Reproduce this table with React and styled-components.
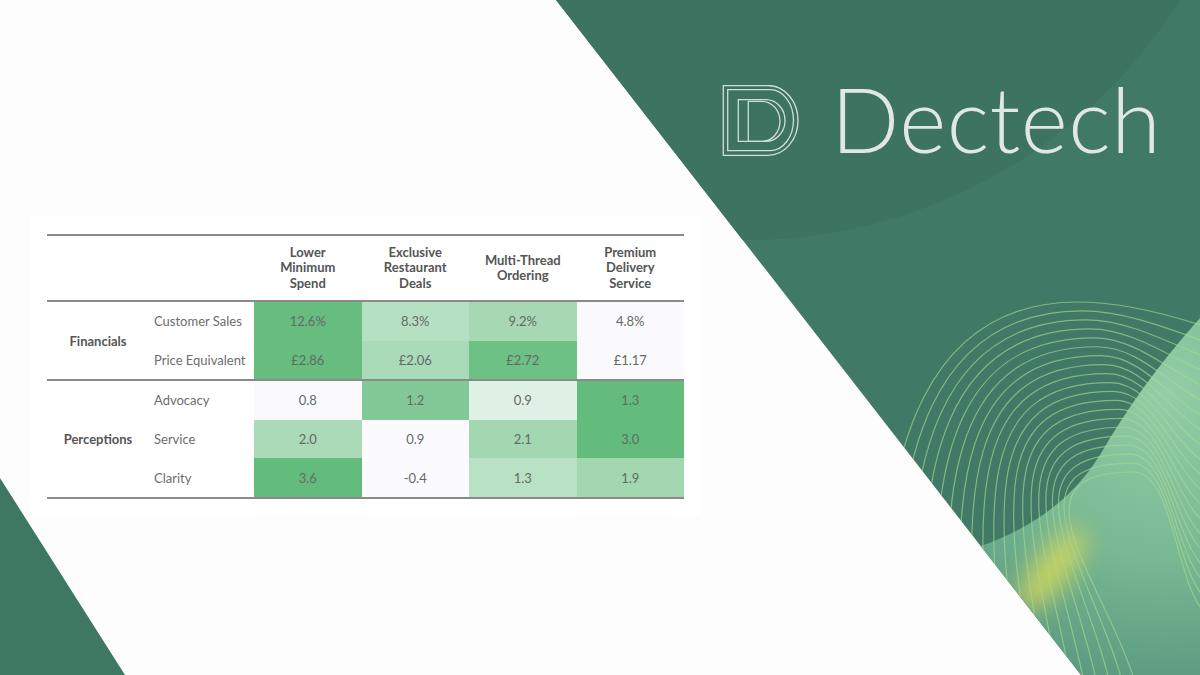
import React from "react";
import styled, { createGlobalStyle } from "styled-components";

const GlobalStyle = createGlobalStyle`
  html, body { margin: 0; padding: 0; background: #fdfdfd; }
  body { font-family: "Lato", "Liberation Sans", sans-serif; }
  * { box-sizing: border-box; }
`;

const Page = styled.div`
  position: relative;
  width: 1200px;
  height: 675px;
  overflow: hidden;
  background: #fdfdfd;
`;

const Backdrop = styled.svg`
  position: absolute;
  inset: 0;
  width: 1200px;
  height: 675px;
  z-index: 0;
`;

const Content = styled.div`
  position: relative;
  z-index: 1;
  display: grid;
  grid-template-columns: 700px 1fr;
  height: 100%;
`;

const LeftColumn = styled.div`
  padding: 215px 0 0 30px;
`;

const RightColumn = styled.div`
  padding: 73px 0 0 22px;
`;

const Card = styled.div`
  width: 670px;
  background: #ffffff;
  padding: 19px 16px 16px 17px;
`;

const Table = styled.div`
  width: 637px;
  border-top: 2px solid #8a8a8a;
  border-bottom: 2px solid #8a8a8a;
`;

const COLS = "107px 100px repeat(4, 107.5px)";

const HeaderRow = styled.div`
  display: grid;
  grid-template-columns: ${COLS};
  height: 64px;
`;

const HeaderCell = styled.div`
  display: flex;
  flex-direction: column;
  align-items: center;
  justify-content: center;
  text-align: center;
  font-weight: 700;
  font-size: 13px;
  line-height: 15.4px;
  color: #555555;
`;

const Line = styled.span`
  display: block;
  white-space: nowrap;
`;

const Section = styled.div`
  display: grid;
  grid-template-columns: ${COLS};
  grid-auto-rows: ${(p) => p.$rowH}px;
  border-top: 2px solid #8a8a8a;
`;

const GroupLabel = styled.div`
  grid-row: span ${(p) => p.$rows};
  display: flex;
  align-items: center;
  justify-content: center;
  padding-right: 5px;
  font-weight: 700;
  font-size: 13px;
  color: #555555;
  background: #ffffff;
`;

const SubLabel = styled.div`
  display: flex;
  align-items: center;
  font-size: 13px;
  color: #6d6d6d;
  background: #ffffff;
  white-space: nowrap;
`;

const ValueCell = styled.div`
  display: flex;
  align-items: center;
  justify-content: center;
  font-size: 13px;
  color: #636a66;
  background: ${(p) => p.$bg};
`;

const Logo = styled.div`
  display: flex;
  align-items: flex-start;
  gap: 31px;
`;

const LogoMark = styled.svg`
  width: 78px;
  height: 72px;
  margin-top: 12px;
  flex: none;
`;

const Wordmark = styled.div`
  font-family: "Lato", "Liberation Sans", sans-serif;
  font-weight: 300;
  font-size: 90px;
  line-height: 90px;
  color: #e1e7e3;
  letter-spacing: 0.5px;
`;

const headers = [
  ["Lower", "Minimum", "Spend"],
  ["Exclusive", "Restaurant", "Deals"],
  ["Multi-Thread", "Ordering"],
  ["Premium", "Delivery", "Service"],
];

const groups = [
  {
    name: "Financials",
    rowH: 38.5,
    items: [
      {
        label: "Customer Sales",
        cells: [
          ["12.6%", "#66bd7e"],
          ["8.3%", "#b6e0c2"],
          ["9.2%", "#a5d8b3"],
          ["4.8%", "#fafafc"],
        ],
      },
      {
        label: "Price Equivalent",
        cells: [
          ["£2.86", "#66bd7e"],
          ["£2.06", "#aadbb8"],
          ["£2.72", "#6ec185"],
          ["£1.17", "#fafafc"],
        ],
      },
    ],
  },
  {
    name: "Perceptions",
    rowH: 38.7,
    items: [
      {
        label: "Advocacy",
        cells: [
          ["0.8", "#fafafc"],
          ["1.2", "#83c998"],
          ["0.9", "#dff0e4"],
          ["1.3", "#64bc7c"],
        ],
      },
      {
        label: "Service",
        cells: [
          ["2.0", "#aadab7"],
          ["0.9", "#fbfbfd"],
          ["2.1", "#a3d7b1"],
          ["3.0", "#64bc7c"],
        ],
      },
      {
        label: "Clarity",
        cells: [
          ["3.6", "#64bc7c"],
          ["-0.4", "#fbfbfd"],
          ["1.3", "#b9e1c4"],
          ["1.9", "#a2d7b0"],
        ],
      },
    ],
  },
];

function dPath(L, T, B, S, rx) {
  const ry = (B - T) / 2;
  return `M${L} ${T} H${S} A${rx} ${ry} 0 0 1 ${S} ${B} H${L} Z`;
}

function waveLines() {
  const out = [];
  const n = 20;
  for (let i = 0; i < n; i++) {
    const t = i / (n - 1);
    const x0 = 890 + t * 250;
    const xp = 1078 + t * 80 - t * t * 25;
    const yp = 302 + t * 170;
    const ye = 330 + t * 290;
    const d = `M${x0} 700 C ${x0 - 25} ${yp + 120} ${xp - 135} ${yp} ${xp} ${yp} C ${xp + 45} ${yp} 1175 ${ye - 14} 1215 ${ye}`;
    out.push(d);
  }
  return out;
}

function Background() {
  const lines = waveLines();
  return (
    <Backdrop viewBox="0 0 1200 675" aria-hidden="true">
      <defs>
        <clipPath id="greenClip">
          <path d="M556 0 L1200 0 L1200 675 L1081 675 Z" />
        </clipPath>
        <radialGradient id="lightGrad" cx="1165" cy="395" r="330" gradientUnits="userSpaceOnUse">
          <stop offset="0" stopColor="#92cea6" />
          <stop offset="0.5" stopColor="#78b893" />
          <stop offset="1" stopColor="#52917a" />
        </radialGradient>
        <filter id="glowBlur" x="-100%" y="-100%" width="300%" height="300%">
          <feGaussianBlur stdDeviation="12" />
        </filter>
      </defs>
      <path d="M0 478 L125 675 L0 675 Z" fill="#3e7762" />
      <g clipPath="url(#greenClip)">
        <rect x="500" y="0" width="700" height="675" fill="#407965" />
        <circle cx="746" cy="-272" r="512" fill="#3c7361" />
        <path
          d="M1215 305 L1200 318 Q1140 385 1100 455 Q1060 520 975 548 L960 700 L1220 700 Z"
          fill="url(#lightGrad)"
        />
        <ellipse
          cx="1052"
          cy="570"
          rx="18"
          ry="50"
          transform="rotate(38 1052 570)"
          fill="#d6d85a"
          opacity="0.85"
          filter="url(#glowBlur)"
        />
        <g fill="none" stroke="#a9d892" strokeWidth="1.2" opacity="0.65">
          {lines.map((d, i) => (
            <path key={i} d={d} />
          ))}
        </g>
      </g>
    </Backdrop>
  );
}

export default function App() {
  return (
    <>
      <GlobalStyle />
      <Page>
        <Background />
        <Content>
          <LeftColumn>
            <Card>
              <Table>
                <HeaderRow>
                  <HeaderCell />
                  <HeaderCell />
                  {headers.map((lines, i) => (
                    <HeaderCell key={i}>
                      {lines.map((l) => (
                        <Line key={l}>{l}</Line>
                      ))}
                    </HeaderCell>
                  ))}
                </HeaderRow>
                {groups.map((g) => (
                  <Section key={g.name} $rowH={g.rowH}>
                    <GroupLabel $rows={g.items.length}>{g.name}</GroupLabel>
                    {g.items.map((item) => (
                      <React.Fragment key={item.label}>
                        <SubLabel>{item.label}</SubLabel>
                        {item.cells.map(([v, bg], j) => (
                          <ValueCell key={j} $bg={bg}>
                            {v}
                          </ValueCell>
                        ))}
                      </React.Fragment>
                    ))}
                  </Section>
                ))}
              </Table>
            </Card>
          </LeftColumn>
          <RightColumn>
            <Logo>
              <LogoMark viewBox="0 0 78 72">
                <g fill="none" stroke="#d3ddd7" strokeWidth="1.3">
                  <path d={dPath(1.3, 0.5, 70.3, 46, 30)} />
                  <path d={dPath(16.3, 14.7, 56.3, 44, 19)} />
                  <path d={dPath(5.7, 4.7, 65.7, 48, 23.5)} />
                  <path d={dPath(26.3, 16.3, 56.3, 40, 18)} />
                </g>
              </LogoMark>
              <Wordmark>Dectech</Wordmark>
            </Logo>
          </RightColumn>
        </Content>
      </Page>
    </>
  );
}
